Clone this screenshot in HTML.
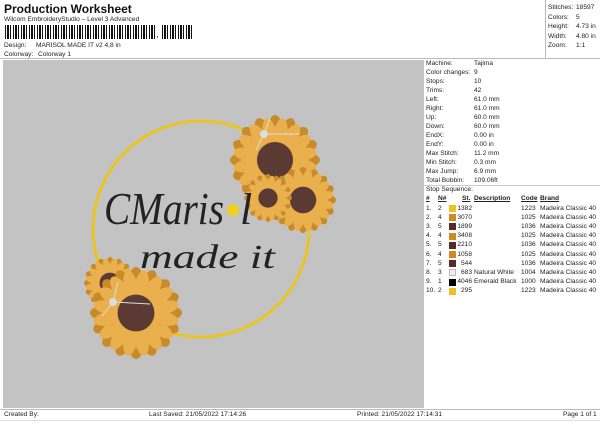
<!DOCTYPE html>
<html><head><meta charset="utf-8"><style>
*{margin:0;padding:0;box-sizing:border-box}
body{width:600px;height:424px;background:#fff;font-family:"Liberation Sans",sans-serif;color:#222;position:relative;overflow:hidden;font-size:6.6px}
.a{position:absolute;white-space:nowrap}
.bc{position:absolute;left:5px;top:25px;height:14px;width:150px;background:repeating-linear-gradient(90deg,#111 0 1px,#fff 1px 2px,#111 2px 4px,#fff 4px 5px,#111 5px 6px,#fff 6px 8px)}
</style></head><body>
<div class="a" style="left:4px;top:2px;font-size:12px;font-weight:bold;color:#111">Production Worksheet</div>
<div class="a" style="left:4px;top:16px">Wilcom EmbroideryStudio – Level 3 Advanced</div>
<div class="bc"></div><div class="a" style="left:156px;top:29px;font-size:9px">,</div>
<div class="bc" style="left:162px;width:32px"></div>
<div class="a" style="left:4px;top:42px">Design:</div><div class="a" style="left:36px;top:42px">MARISOL MADE IT v2 4,8 in</div>
<div class="a" style="left:4px;top:51px">Colorway:</div><div class="a" style="left:38px;top:51px">Colorway 1</div>
<div style="position:absolute;left:545px;top:0;width:1px;height:59px;background:#bbb"></div>
<div style="position:absolute;left:0;top:58px;width:600px;height:1px;background:#bbb"></div>
<div class="a" style="left:548px;top:3px;line-height:9.5px">Stitches:<br>Colors:<br>Height:<br>Width:<br>Zoom:</div>
<div class="a" style="left:576px;top:3px;line-height:9.5px">18597<br>5<br>4.73 in<br>4.80 in<br>1:1</div>
<div style="position:absolute;left:3px;top:60px;width:421px;height:348px;background:#c3c3c3"></div>
<svg style="position:absolute;left:0;top:0" width="424" height="410">
<defs>
<g id="f">
<g fill="#c98a2a">
<ellipse cx="0" cy="-0.68" rx="0.16" ry="0.32"/><ellipse cx="0" cy="-0.68" rx="0.16" ry="0.32" transform="rotate(22.5)"/><ellipse cx="0" cy="-0.68" rx="0.16" ry="0.32" transform="rotate(45)"/><ellipse cx="0" cy="-0.68" rx="0.16" ry="0.32" transform="rotate(67.5)"/><ellipse cx="0" cy="-0.68" rx="0.16" ry="0.32" transform="rotate(90)"/><ellipse cx="0" cy="-0.68" rx="0.16" ry="0.32" transform="rotate(112.5)"/><ellipse cx="0" cy="-0.68" rx="0.16" ry="0.32" transform="rotate(135)"/><ellipse cx="0" cy="-0.68" rx="0.16" ry="0.32" transform="rotate(157.5)"/><ellipse cx="0" cy="-0.68" rx="0.16" ry="0.32" transform="rotate(180)"/><ellipse cx="0" cy="-0.68" rx="0.16" ry="0.32" transform="rotate(202.5)"/><ellipse cx="0" cy="-0.68" rx="0.16" ry="0.32" transform="rotate(225)"/><ellipse cx="0" cy="-0.68" rx="0.16" ry="0.32" transform="rotate(247.5)"/><ellipse cx="0" cy="-0.68" rx="0.16" ry="0.32" transform="rotate(270)"/><ellipse cx="0" cy="-0.68" rx="0.16" ry="0.32" transform="rotate(292.5)"/><ellipse cx="0" cy="-0.68" rx="0.16" ry="0.32" transform="rotate(315)"/><ellipse cx="0" cy="-0.68" rx="0.16" ry="0.32" transform="rotate(337.5)"/>
</g>
<g fill="#eab04e">
<ellipse cx="0" cy="-0.6" rx="0.15" ry="0.34" transform="rotate(11.25)"/><ellipse cx="0" cy="-0.6" rx="0.15" ry="0.34" transform="rotate(33.75)"/><ellipse cx="0" cy="-0.6" rx="0.15" ry="0.34" transform="rotate(56.25)"/><ellipse cx="0" cy="-0.6" rx="0.15" ry="0.34" transform="rotate(78.75)"/><ellipse cx="0" cy="-0.6" rx="0.15" ry="0.34" transform="rotate(101.25)"/><ellipse cx="0" cy="-0.6" rx="0.15" ry="0.34" transform="rotate(123.75)"/><ellipse cx="0" cy="-0.6" rx="0.15" ry="0.34" transform="rotate(146.25)"/><ellipse cx="0" cy="-0.6" rx="0.15" ry="0.34" transform="rotate(168.75)"/><ellipse cx="0" cy="-0.6" rx="0.15" ry="0.34" transform="rotate(191.25)"/><ellipse cx="0" cy="-0.6" rx="0.15" ry="0.34" transform="rotate(213.75)"/><ellipse cx="0" cy="-0.6" rx="0.15" ry="0.34" transform="rotate(236.25)"/><ellipse cx="0" cy="-0.6" rx="0.15" ry="0.34" transform="rotate(258.75)"/><ellipse cx="0" cy="-0.6" rx="0.15" ry="0.34" transform="rotate(281.25)"/><ellipse cx="0" cy="-0.6" rx="0.15" ry="0.34" transform="rotate(303.75)"/><ellipse cx="0" cy="-0.6" rx="0.15" ry="0.34" transform="rotate(326.25)"/><ellipse cx="0" cy="-0.6" rx="0.15" ry="0.34" transform="rotate(348.75)"/>
</g>
<circle r="0.42" fill="#e6a848"/>
<circle r="0.4" fill="#5a3a32"/>
</g>
</defs>
<circle cx="201" cy="229" r="108" fill="none" stroke="#e8c520" stroke-width="3"/>
<use href="#f" transform="translate(275,160) scale(45)"/>
<use href="#f" transform="translate(303,200) scale(33)"/>
<use href="#f" transform="translate(268,198) scale(24)"/>
<use href="#f" transform="translate(110,283) scale(26)"/>
<use href="#f" transform="translate(136,313) scale(46)"/>
<circle cx="233" cy="210" r="6" fill="#f0d020"/>
<circle cx="264" cy="134" r="4" fill="#ddd"/><path d="M264 134 L300 134 M264 134 L256 150 M264 134 L270 118" stroke="#ddd" stroke-width="1"/>
<circle cx="113" cy="302" r="4" fill="#ddd"/><path d="M113 302 L150 304 M113 302 L118 282 M113 302 L102 316" stroke="#ddd" stroke-width="1"/>
<text x="104" y="224" font-family="Liberation Serif" font-style="italic" font-size="46" fill="#222" textLength="120" lengthAdjust="spacingAndGlyphs">CMaris</text>
<text x="240" y="224" font-family="Liberation Serif" font-style="italic" font-size="44" fill="#222">l</text>
<text x="140" y="268" font-family="Liberation Serif" font-style="italic" font-size="34" fill="#222" textLength="135" lengthAdjust="spacingAndGlyphs">made  it</text>
</svg>
<div class="a" style="left:426px;top:59px;line-height:9px">Machine:<br>Color changes:<br>Stops:<br>Trims:<br>Left:<br>Right:<br>Up:<br>Down:<br>EndX:<br>EndY:<br>Max Stitch:<br>Min Stitch:<br>Max Jump:<br>Total Bobbin:</div>
<div class="a" style="left:474px;top:59px;line-height:9px">Tajima<br>9<br>10<br>42<br>61.0 mm<br>61.0 mm<br>60.0 mm<br>60.0 mm<br>0.00 in<br>0.00 in<br>11.2 mm<br>0.3 mm<br>6.9 mm<br>109.06ft</div>
<div style="position:absolute;left:424px;top:185px;width:176px;height:1px;background:#ccc"></div>
<div class="a" style="left:426px;top:186px">Stop Sequence:</div>
<div class="a" style="left:426px;top:195px;font-weight:bold;text-decoration:underline">#</div>
<div class="a" style="left:438px;top:195px;font-weight:bold;text-decoration:underline">N#</div>
<div class="a" style="left:462px;top:195px;font-weight:bold;text-decoration:underline">St.</div>
<div class="a" style="left:474px;top:195px;font-weight:bold;text-decoration:underline">Description</div>
<div class="a" style="left:521px;top:195px;font-weight:bold;text-decoration:underline">Code</div>
<div class="a" style="left:540px;top:195px;font-weight:bold;text-decoration:underline">Brand</div>
<div class="a" style="left:426px;top:203.5px;line-height:9.2px">1.<br>2.<br>3.<br>4.<br>5.<br>6.<br>7.<br>8.<br>9.<br>10.</div>
<div class="a" style="left:438px;top:203.5px;line-height:9.2px">2<br>4<br>5<br>4<br>5<br>4<br>5<br>3<br>1<br>2</div>
<div class="a" style="left:448px;top:203.5px;line-height:9.2px;width:24px;text-align:right">1382<br>3070<br>1899<br>3408<br>2210<br>1058<br>544<br>683<br>4046<br>295</div>
<div class="a" style="left:474px;top:203.5px;line-height:9.2px">&nbsp;<br>&nbsp;<br>&nbsp;<br>&nbsp;<br>&nbsp;<br>&nbsp;<br>&nbsp;<br>Natural White<br>Emerald Black<br>&nbsp;</div>
<div class="a" style="left:521px;top:203.5px;line-height:9.2px">1223<br>1025<br>1036<br>1025<br>1036<br>1025<br>1036<br>1004<br>1000<br>1223</div>
<div class="a" style="left:540px;top:203.5px;line-height:9.2px">Madeira Classic 40<br>Madeira Classic 40<br>Madeira Classic 40<br>Madeira Classic 40<br>Madeira Classic 40<br>Madeira Classic 40<br>Madeira Classic 40<br>Madeira Classic 40<br>Madeira Classic 40<br>Madeira Classic 40</div>
<div style="position:absolute;left:449px;top:205px;width:7px;line-height:0">
<div style="height:7px;background:#f0c020;margin-bottom:2.2px"></div>
<div style="height:7px;background:#d08820;margin-bottom:2.2px"></div>
<div style="height:7px;background:#5a2a28;margin-bottom:2.2px"></div>
<div style="height:7px;background:#d08820;margin-bottom:2.2px"></div>
<div style="height:7px;background:#5a2a28;margin-bottom:2.2px"></div>
<div style="height:7px;background:#d08820;margin-bottom:2.2px"></div>
<div style="height:7px;background:#5a2a28;margin-bottom:2.2px"></div>
<div style="height:7px;background:#eee;border:1px solid #bbb;margin-bottom:2.2px"></div>
<div style="height:7px;background:#000;margin-bottom:2.2px"></div>
<div style="height:7px;background:#f0c020"></div>
</div>
<div style="position:absolute;left:0;top:409px;width:600px;height:1px;background:#bbb"></div>
<div style="position:absolute;left:0;top:420px;width:600px;height:1px;background:#ddd"></div>
<div class="a" style="left:4px;top:411px">Created By:</div>
<div class="a" style="left:149px;top:411px">Last Saved: 21/05/2022 17:14:26</div>
<div class="a" style="left:357px;top:411px">Printed: 21/05/2022 17:14:31</div>
<div class="a" style="left:563px;top:411px">Page 1 of 1</div>
</body></html>
